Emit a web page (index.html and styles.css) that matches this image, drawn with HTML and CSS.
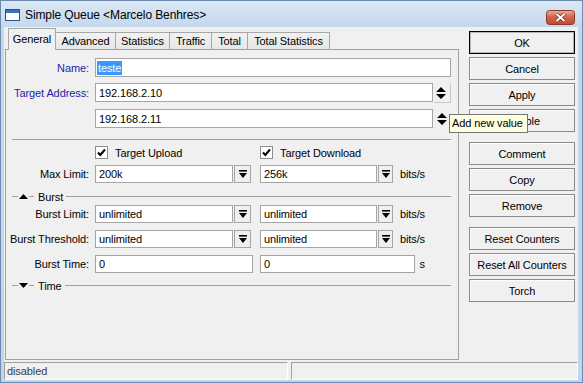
FILE: index.html
```html
<!DOCTYPE html>
<html lang="en">
<head>
    <meta charset="UTF-8">
    <meta name="viewport" content="width=device-width, initial-scale=1.0">
    <title>Simple Queue &lt;Marcelo Benhres&gt;</title>
    <link rel="stylesheet" href="styles.css">
</head>
<body>
<div class="window">
    <div class="titlebar">
        <svg class="app-icon" width="15" height="12" viewBox="0 0 15 12">
            <rect x="0.5" y="0.5" width="14" height="11" fill="#ffffff" stroke="#2b4f86"/>
            <rect x="1" y="1" width="13" height="3" fill="#3c70c0"/>
        </svg>
        <span class="title">Simple Queue &lt;Marcelo Benhres&gt;</span>
        <div class="close-btn">
            <svg width="29" height="15" viewBox="0 0 29 15">
                <defs>
                    <linearGradient id="closeGrad" x1="0" y1="0" x2="0" y2="1">
                        <stop offset="0" stop-color="#eab0a2"/>
                        <stop offset="0.45" stop-color="#d5654c"/>
                        <stop offset="1" stop-color="#c4482c"/>
                    </linearGradient>
                </defs>
                <rect x="0.5" y="0.5" width="28" height="14" rx="3" fill="url(#closeGrad)" stroke="#86392a"/>
                <path d="M10.5 4 L18.5 11 M18.5 4 L10.5 11" stroke="#6a2a1e" stroke-width="3.4"/>
                <path d="M10.5 4 L18.5 11 M18.5 4 L10.5 11" stroke="#ffffff" stroke-width="2"/>
            </svg>
        </div>
    </div>

    <div class="client">
        <div class="content">
            <div class="main">
                <div class="tabs">
                    <div class="tab active tab-general">General</div>
                    <div class="tab tab-advanced">Advanced</div>
                    <div class="tab tab-statistics">Statistics</div>
                    <div class="tab tab-traffic">Traffic</div>
                    <div class="tab tab-total">Total</div>
                    <div class="tab tab-total-stats">Total Statistics</div>
                </div>

                <div class="panel">
                    <div class="row tall">
                        <span class="label required">Name:</span>
                        <div class="field name-field"><span class="selected">teste</span></div>
                    </div>
                    <div class="row tall gap-6">
                        <span class="label required">Target Address:</span>
                        <div class="field addr-field">192.168.2.10</div>
                        <div class="spin framed">
                            <svg width="10" height="12" viewBox="0 0 10 12"><path d="M0 5 L5 0 L10 5Z M0 7 L10 7 L5 12Z" fill="#000"/></svg>
                        </div>
                    </div>
                    <div class="row tall gap-7">
                        <span class="label"></span>
                        <div class="field addr-field">192.168.2.11</div>
                        <div class="spin">
                            <svg width="10" height="12" viewBox="0 0 10 12"><path d="M0 5 L5 0 L10 5Z M0 7 L10 7 L5 12Z" fill="#000"/></svg>
                        </div>
                    </div>

                    <div class="separator"></div>

                    <div class="row check-row">
                        <span class="label"></span>
                        <div class="col">
                            <span class="checkbox"><svg width="11" height="11" viewBox="0 0 11 11"><path d="M2 5.5 L4.3 8 L9 2.5" fill="none" stroke="#000" stroke-width="2"/></svg></span>
                            Target Upload
                        </div>
                        <div class="col">
                            <span class="checkbox"><svg width="11" height="11" viewBox="0 0 11 11"><path d="M2 5.5 L4.3 8 L9 2.5" fill="none" stroke="#000" stroke-width="2"/></svg></span>
                            Target Download
                        </div>
                    </div>

                    <div class="row max-row">
                        <span class="label">Max Limit:</span>
                        <div class="col">
                            <div class="field short">200k</div>
                            <div class="drop"><svg width="8" height="8" viewBox="0 0 8 8"><rect x="0" y="0" width="8" height="1.6" fill="#000"/><path d="M0 3 L8 3 L4 8Z" fill="#000"/></svg></div>
                        </div>
                        <div class="col">
                            <div class="field short">256k</div>
                            <div class="drop"><svg width="8" height="8" viewBox="0 0 8 8"><rect x="0" y="0" width="8" height="1.6" fill="#000"/><path d="M0 3 L8 3 L4 8Z" fill="#000"/></svg></div>
                            <span class="unit">bits/s</span>
                        </div>
                    </div>

                    <div class="section burst-head">
                        <span class="sec-line lead"></span>
                        <svg width="9" height="5" viewBox="0 0 9 5"><path d="M0 5 L4.5 0 L9 5Z" fill="#000"/></svg>
                        <span class="sec-line mid"></span>
                        <span class="sec-title">Burst</span>
                        <span class="sec-line rest"></span>
                    </div>

                    <div class="row burst-row">
                        <span class="label">Burst Limit:</span>
                        <div class="col">
                            <div class="field short">unlimited</div>
                            <div class="drop"><svg width="8" height="8" viewBox="0 0 8 8"><rect x="0" y="0" width="8" height="1.6" fill="#000"/><path d="M0 3 L8 3 L4 8Z" fill="#000"/></svg></div>
                        </div>
                        <div class="col">
                            <div class="field short">unlimited</div>
                            <div class="drop"><svg width="8" height="8" viewBox="0 0 8 8"><rect x="0" y="0" width="8" height="1.6" fill="#000"/><path d="M0 3 L8 3 L4 8Z" fill="#000"/></svg></div>
                            <span class="unit">bits/s</span>
                        </div>
                    </div>
                    <div class="row burst-row next">
                        <span class="label">Burst Threshold:</span>
                        <div class="col">
                            <div class="field short">unlimited</div>
                            <div class="drop"><svg width="8" height="8" viewBox="0 0 8 8"><rect x="0" y="0" width="8" height="1.6" fill="#000"/><path d="M0 3 L8 3 L4 8Z" fill="#000"/></svg></div>
                        </div>
                        <div class="col">
                            <div class="field short">unlimited</div>
                            <div class="drop"><svg width="8" height="8" viewBox="0 0 8 8"><rect x="0" y="0" width="8" height="1.6" fill="#000"/><path d="M0 3 L8 3 L4 8Z" fill="#000"/></svg></div>
                            <span class="unit">bits/s</span>
                        </div>
                    </div>
                    <div class="row burst-row next">
                        <span class="label">Burst Time:</span>
                        <div class="col">
                            <div class="field half">0</div>
                        </div>
                        <div class="col">
                            <div class="field half">0</div>
                            <span class="unit s-unit">s</span>
                        </div>
                    </div>

                    <div class="section time-head">
                        <span class="sec-line lead"></span>
                        <svg width="9" height="5" viewBox="0 0 9 5"><path d="M0 0 L9 0 L4.5 5Z" fill="#000"/></svg>
                        <span class="sec-line mid"></span>
                        <span class="sec-title">Time</span>
                        <span class="sec-line rest"></span>
                    </div>
                </div>
            </div>

            <div class="actions">
                <div class="btn-group">
                    <button class="btn default">OK</button>
                    <button class="btn">Cancel</button>
                    <button class="btn">Apply</button>
                    <button class="btn">Disable</button>
                </div>
                <div class="btn-group">
                    <button class="btn">Comment</button>
                    <button class="btn">Copy</button>
                    <button class="btn">Remove</button>
                </div>
                <div class="btn-group">
                    <button class="btn">Reset Counters</button>
                    <button class="btn">Reset All Counters</button>
                    <button class="btn">Torch</button>
                </div>
            </div>
        </div>

        <div class="statusbar">
            <div class="status-cell first">disabled</div>
            <div class="status-cell second"></div>
        </div>
    </div>

    <div class="tooltip">Add new value</div>
</div>
</body>
</html>
```

FILE: styles.css
```css
body {
    margin: 0;
    font-family: "Liberation Sans", Arial, sans-serif;
    font-size: 11px;
    letter-spacing: -0.1px;
    color: #000000;
    background-color: #ffffff;
}
.window {
    position: relative;
    width: 583px;
    height: 383px;
    box-sizing: border-box;
    border: 1px solid #6d8bb0;
    padding: 0 4px 2px 3px;
    background: linear-gradient(#dbe7f4, #c4d8ed 26px, #c1d6ec);
    display: flex;
    flex-direction: column;
}
.titlebar {
    height: 26px;
    display: flex;
    align-items: center;
}
.app-icon {
    margin-left: 1px;
    margin-top: 1px;
}
.title {
    margin-left: 5px;
    margin-top: 2px;
    font-size: 12px;
    color: #000000;
    flex: 1;
}
.close-btn {
    align-self: flex-start;
    margin-top: 9px;
    margin-right: 3px;
    height: 15px;
}
.client {
    background-color: #f0f0f0;
    height: 353px;
    display: flex;
    flex-direction: column;
}
.content {
    display: flex;
    height: 333px;
}
.main {
    width: 455px;
    padding-left: 1px;
    box-sizing: border-box;
    display: flex;
    flex-direction: column;
}

/* tabs */
.tabs {
    display: flex;
    align-items: flex-end;
    height: 21px;
    margin-top: 1px;
    padding-left: 3px;
}
.tab {
    height: 17px;
    line-height: 16px;
    box-sizing: border-box;
    text-align: center;
    white-space: nowrap;
    border: 1px solid #a7a7a7;
    border-bottom: none;
    border-left: none;
    background: linear-gradient(#f2f2f2, #e6e6e6);
}
.tab.active {
    height: 22px;
    line-height: 20px;
    margin-bottom: -1px;
    border-left: 1px solid #a7a7a7;
    background: #f0f0f0;
    position: relative;
    z-index: 1;
}
.tab-general { width: 48px; }
.tab-advanced { width: 60px; }
.tab-statistics { width: 54px; }
.tab-traffic { width: 42px; }
.tab-total { width: 36px; }
.tab-total-stats { width: 82px; }

.panel {
    height: 311px;
    box-sizing: border-box;
    border: 1px solid #a0a0a0;
    padding-top: 8px;
    background-color: #f0f0f0;
}

/* form rows */
.row {
    display: flex;
    align-items: center;
    height: 18px;
}
.row.tall {
    height: 19px;
}
.gap-6 {
    margin-top: 6px;
}
.gap-7 {
    margin-top: 7px;
}
.label {
    width: 83px;
    margin-right: 6px;
    text-align: right;
    flex-shrink: 0;
    white-space: nowrap;
}
.label.required {
    color: #1d1da8;
}
.field {
    height: 100%;
    box-sizing: border-box;
    border: 1px solid #a5a5a5;
    background-color: #ffffff;
    padding-left: 3px;
    display: flex;
    align-items: center;
    white-space: nowrap;
}
.name-field {
    width: 356px;
    padding-left: 1px;
}
.selected {
    background-color: #3399ff;
    color: #ffffff;
    padding: 0 1px;
    line-height: 14px;
}
.addr-field {
    width: 338px;
}
.spin {
    width: 17px;
    height: 20px;
    margin-left: 1px;
    box-sizing: border-box;
    display: flex;
    align-items: center;
    justify-content: center;
    align-self: flex-start;
    padding-right: 2px;
}
.spin.framed {
    border-right: 1px solid #c9c9c9;
    border-bottom: 1px solid #c9c9c9;
}
.separator {
    margin: 11px 0 0 6px;
    width: 439px;
    border-top: 1px solid #a0a0a0;
}
.check-row {
    height: 15px;
    margin-top: 5px;
}
.col {
    width: 165px;
    height: 100%;
    display: flex;
    align-items: center;
    flex-shrink: 0;
}
.checkbox {
    width: 13px;
    height: 13px;
    box-sizing: border-box;
    border: 1px solid #8e8f8f;
    background-color: #ffffff;
    margin-right: 7px;
    display: flex;
    align-items: center;
    justify-content: center;
}
.max-row {
    margin-top: 5px;
}
.field.short {
    width: 138px;
}
.field.half {
    width: 158px;
}
.drop {
    width: 17px;
    height: 100%;
    margin-left: 1px;
    box-sizing: border-box;
    border: 1px solid #a5a5a5;
    background-color: #efefef;
    display: flex;
    align-items: center;
    justify-content: center;
}
.unit {
    margin-left: 7px;
}
.unit.s-unit {
    margin-left: 5px;
}
.section {
    display: flex;
    align-items: center;
    height: 13px;
    margin-left: 6px;
    width: 439px;
}
.burst-head {
    margin-top: 7px;
}
.time-head {
    margin-top: 6px;
}
.sec-line {
    border-top: 1px solid #a0a0a0;
    height: 0;
}
.sec-line.lead {
    width: 6px;
    margin-right: 1px;
}
.sec-line.mid {
    width: 5px;
    margin-left: 1px;
    margin-right: 4px;
}
.sec-line.rest {
    flex: 1;
    margin-left: 3px;
}
.burst-row {
    margin-top: 2px;
}
.burst-row.next {
    margin-top: 7px;
}

/* buttons */
.actions {
    margin-left: 10px;
    padding-top: 4px;
    width: 106px;
    display: flex;
    flex-direction: column;
    gap: 10px;
}
.btn-group {
    display: flex;
    flex-direction: column;
    gap: 3px;
}
.btn {
    height: 23px;
    width: 106px;
    box-sizing: border-box;
    border: 1px solid #8a8a8a;
    background-color: #f0f0f0;
    box-shadow: inset 1px 1px 0 #fdfdfd;
    font-family: "Liberation Sans", Arial, sans-serif;
    font-size: 11px;
    letter-spacing: -0.1px;
    color: #000000;
    padding: 0;
}
.btn.default {
    border: 1px solid #000000;
    box-shadow: inset 0 0 0 1px #b5b5b5;
}

/* status bar */
.statusbar {
    display: flex;
    margin-top: 2px;
    height: 18px;
    gap: 3px;
}
.status-cell {
    box-sizing: border-box;
    height: 18px;
    border-top: 1px solid #a0a0a0;
    border-left: 1px solid #a0a0a0;
    border-bottom: 1px solid #ffffff;
    border-right: 1px solid #ffffff;
    padding-left: 2px;
    line-height: 16px;
    color: #3c3c3c;
}
.status-cell.first {
    width: 284px;
}
.status-cell.second {
    width: 287px;
}
.tooltip {
    position: absolute;
    left: 448px;
    top: 113px;
    width: 79px;
    height: 19px;
    box-sizing: border-box;
    border: 1px solid #767676;
    background-color: #ffffe1;
    padding-left: 2px;
    line-height: 17px;
    z-index: 5;
    white-space: nowrap;
}
```
